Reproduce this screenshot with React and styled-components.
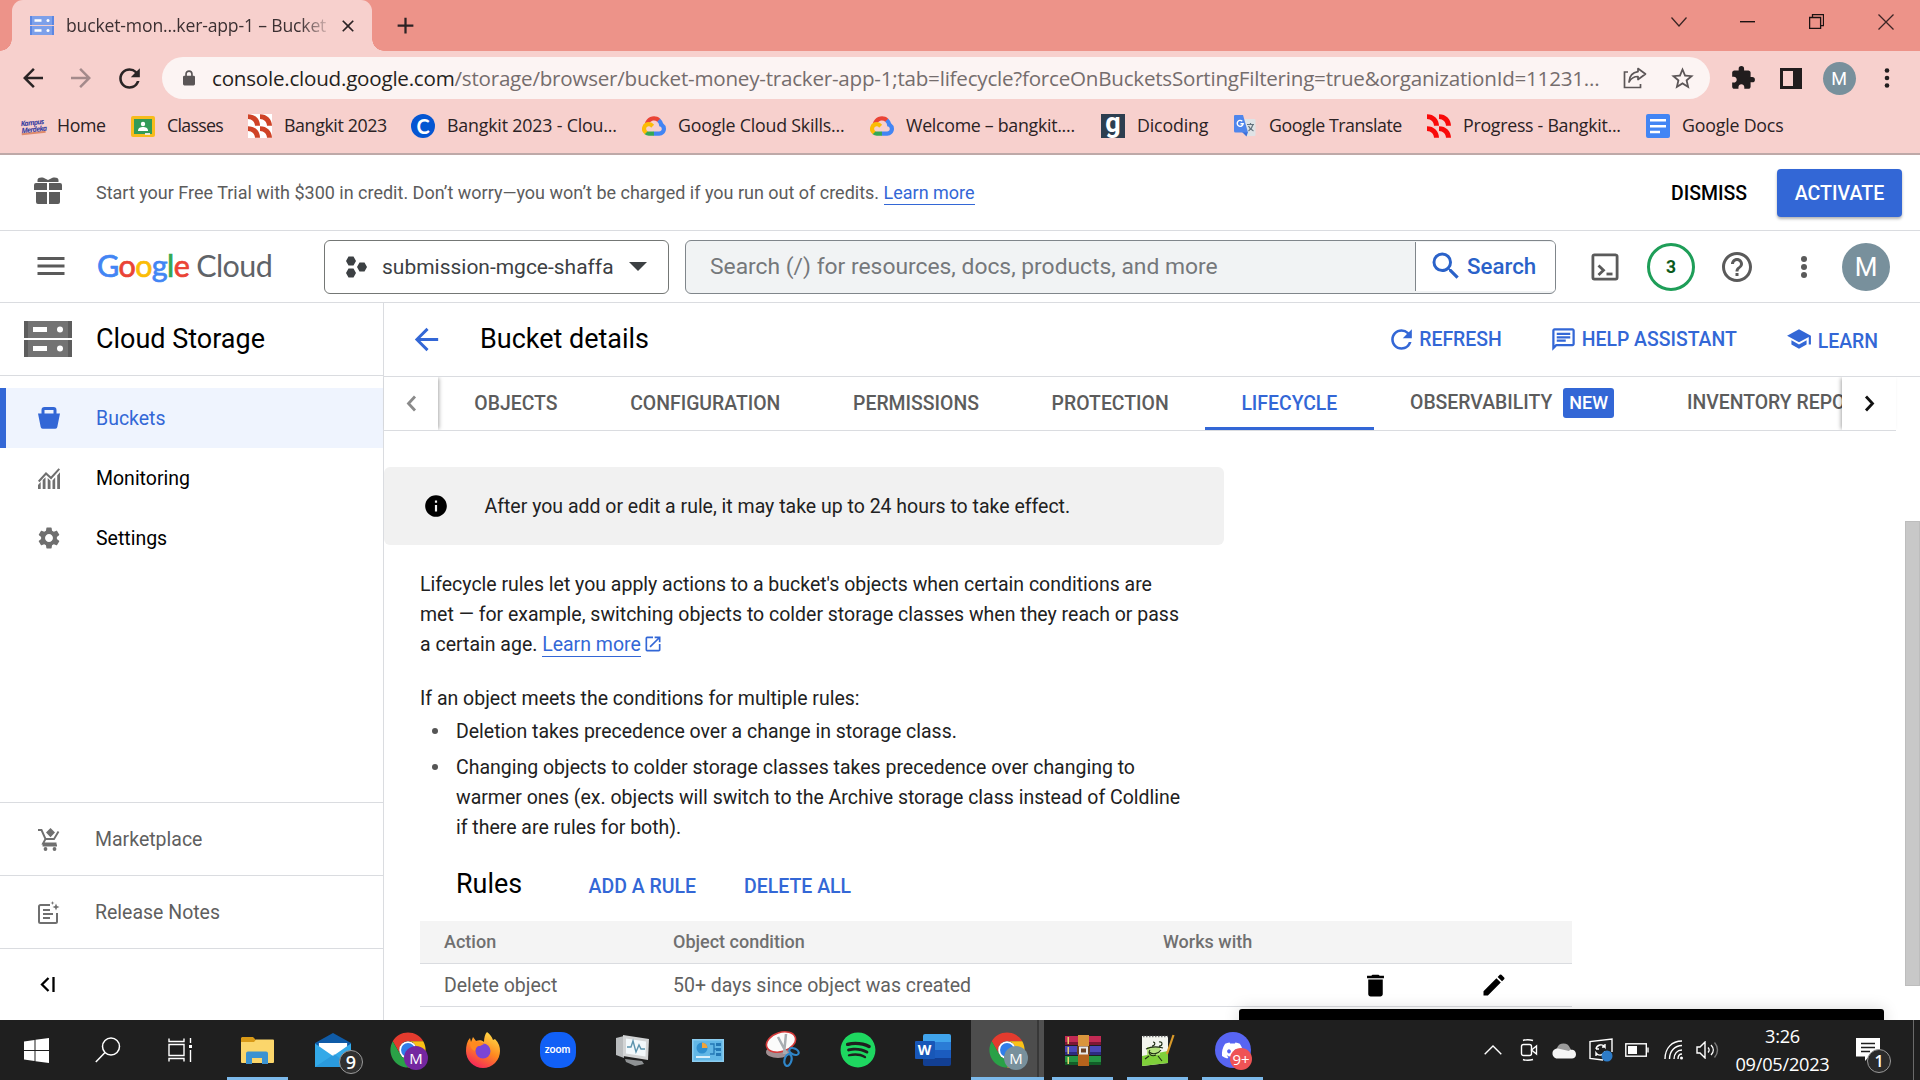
import React from "react";
import styled, { createGlobalStyle, css } from "styled-components";
import {
  MdMenu, MdArrowBack, MdArrowForward, MdRefresh, MdClose, MdAdd, MdStarBorder,
  MdExtension, MdHelpOutline, MdSchool, MdInfo, MdDelete, MdEdit, MdSettings,
  MdOpenInNew, MdSearch, MdOutlineChat,
} from "react-icons/md";
import { FaSpotify, FaDiscord } from "react-icons/fa";

const BLUE = "#3367d6";
const LINE = "#dadce0";

const GlobalStyle = createGlobalStyle`
  *, *::before, *::after { box-sizing: border-box; }
  body { margin: 0; overflow: hidden; background: #fff; }
  svg { display: block; flex: none; }
`;

const Screen = styled.div`
  position: relative;
  width: 1920px;
  height: 1080px;
  display: flex;
  flex-direction: column;
  overflow: hidden;
  white-space: nowrap;
  font-family: Roboto, "Liberation Sans", sans-serif;
  font-size: 19.49px;
  color: #000;
`;

/* ---------- browser ---------- */

const Browser = styled.div`
  flex: none;
  height: 155px;
  background: #f7d0cd;
  border-bottom: 2px solid #bea9a8;
  font-family: "Open Sans", "Noto Sans", sans-serif;
  color: #2b2224;
`;
const TabStrip = styled.div`
  height: 51px;
  background: #ed9389;
  display: flex;
  padding-left: 12px;
`;
const BrowserTab = styled.div`
  position: relative;
  width: 360px;
  height: 51px;
  background: #f7d0cd;
  border-radius: 11px 11px 0 0;
  display: flex;
  align-items: center;
  padding: 0 14px 0 18px;
  &::before, &::after {
    content: "";
    position: absolute;
    bottom: 0;
    width: 12px;
    height: 12px;
  }
  &::before { left: -12px; background: radial-gradient(circle at 0 0, #ed9389 11.5px, #f7d0cd 12px); }
  &::after { right: -12px; background: radial-gradient(circle at 100% 0, #ed9389 11.5px, #f7d0cd 12px); }
`;
const TabTitle = styled.span`
  margin-left: 12px;
  padding-bottom: 2px;
  width: 265px;
  overflow: hidden;
  font-size: 17.6px;
  letter-spacing: -0.17px;
  color: #3c3032;
  mask-image: linear-gradient(90deg, #000 234px, rgba(0, 0, 0, 0.15) 262px);
`;
const TabClose = styled.span`margin-left: 9px; display: flex;`;
const NewTab = styled.span`margin-left: 20px; padding-top: 12px; color: #2b2224;`;
const WindowControls = styled.div`
  margin-left: auto;
  width: 276px;
  height: 43px;
  display: grid;
  grid-template-columns: repeat(4, 69px);
  align-items: center;
  justify-items: center;
`;
const AddressBar = styled.div`
  height: 54px;
  padding: 6px 0 6px 15px;
  display: flex;
  align-items: center;
`;
const NavButton = styled.span`
  width: 48px;
  padding-left: 3px;
  color: ${(p) => (p.$muted ? "#a48a8b" : "#2a2425")};
`;
const Omnibox = styled.div`
  width: 1548px;
  height: 42px;
  margin-left: 3px;
  border-radius: 21px;
  background: #fcf4f3;
  display: flex;
  align-items: center;
  padding: 0 14px 0 21px;
`;
const Url = styled.span`
  margin-left: 17px;
  width: 1411px;
  font-size: 20.6px;
  letter-spacing: -0.228px;
  color: #756d6d;
  b { font-weight: 400; color: #251f20; }
`;
const BrowserActions = styled.div`
  display: grid;
  grid-template-columns: 48px 48px 48px 48px;
  align-items: center;
  justify-items: center;
  margin-left: 9px;
  color: #211d1e;
`;
const RoundAvatar = styled.span`
  width: ${(p) => p.$size}px;
  height: ${(p) => p.$size}px;
  border-radius: 50%;
  background: ${(p) => p.$bg || "#78909c"};
  color: #fff;
  display: flex;
  align-items: center;
  justify-content: center;
  font-family: Roboto, sans-serif;
  font-size: ${(p) => p.$font}px;
`;
const BookmarkBar = styled.div`
  height: 42px;
  padding-left: 21px;
  display: flex;
  align-items: center;
`;
const Bookmark = styled.div`
  flex: none;
  width: ${(p) => p.$w}px;
  display: flex;
  align-items: center;
  gap: 12px;
  font-size: 17.8px;
  letter-spacing: ${(p) => p.$ls || 0}px;
`;
const BookmarkName = styled.span`padding-bottom: 2px;`;

/* ---------- console ---------- */

const Banner = styled.div`
  flex: none;
  height: 76px;
  border-bottom: 1px solid ${LINE};
  display: flex;
  align-items: center;
  padding: 0 18px 0 34px;
  font-size: 17.99px;
  color: #5c5c5c;
`;
const BannerText = styled.span`margin-left: 34px;`;
const TextLink = styled.a`
  color: ${BLUE};
  border-bottom: 1px solid ${BLUE};
  padding-bottom: ${(p) => p.$pb || 0}px;
`;
const Dismiss = styled.span`
  margin-left: auto;
  margin-right: 30px;
  padding-top: 2px;
  font-weight: 500;
  font-size: 19.45px;
  color: #000;
`;
const Activate = styled.button`
  width: 125px;
  height: 48px;
  padding: 2px 0 0;
  border: 0;
  border-radius: 4px;
  background: ${BLUE};
  color: #fff;
  font: 500 19.6px Roboto, sans-serif;
  box-shadow: 0 2px 3px rgba(0, 0, 0, 0.3);
`;
const Header = styled.header`
  flex: none;
  height: 72px;
  border-bottom: 1px solid ${LINE};
  display: flex;
  align-items: center;
  padding-left: 33px;
  color: #5a5a5a;
  > svg { margin-bottom: 2px; }
`;
const Logo = styled.span`
  margin-left: 28px;
  padding-bottom: 3px;
  width: 227px;
  font: 400 30.5px Lato, sans-serif;
  letter-spacing: -0.6px;
  display: flex;
  gap: 7px;
  color: #5f6368;
`;
const LogoLetter = styled.span`
  color: ${(p) => p.$c};
  -webkit-text-stroke: 0.7px ${(p) => p.$c};
`;
const ProjectPicker = styled.div`
  width: 345px;
  height: 54px;
  border: 1px solid #747775;
  border-radius: 6px;
  display: flex;
  align-items: center;
  padding-left: 21px;
  font-size: 20.97px;
  color: #3c4043;
`;
const ProjectName = styled.span`margin: 0 15px 0 15px;`;
const SearchBox = styled.div`
  margin-left: 16px;
  width: 871px;
  height: 54px;
  border: 1px solid #80868b;
  border-radius: 6px;
  display: flex;
  overflow: hidden;
  background: #f1f3f4;
  font-size: 22.84px;
  color: #75787b;
`;
const SearchInput = styled.span`
  width: 729px;
  line-height: 51px;
  padding-left: 24px;
`;
const SearchButton = styled.span`
  flex: 1;
  margin: 1px 0 2px;
  border-left: 1px solid #80868b;
  background: #fff;
  display: flex;
  align-items: center;
  padding-left: 12px;
  gap: 3px;
  color: #2a62c9;
  font-weight: 500;
  font-size: 22.3px;
`;
const HeaderTools = styled.div`
  flex: 1;
  display: grid;
  grid-template-columns: 66px 66px 66px 68px 56px;
  padding-left: 16px;
  align-items: center;
  justify-items: center;
`;
const Count = styled.span`
  width: 48px;
  height: 48px;
  border: 3px solid #1e9e58;
  border-radius: 50%;
  display: flex;
  align-items: center;
  justify-content: center;
  font-weight: 700;
  font-size: 17.5px;
  color: #0c5a1d;
`;
const Body = styled.div`
  flex: 1;
  min-height: 0;
  display: flex;
`;
const Sidebar = styled.aside`
  width: 384px;
  border-right: 1px solid ${LINE};
  display: flex;
  flex-direction: column;
`;
const SideTitle = styled.div`
  height: 73px;
  border-bottom: 1px solid ${LINE};
  margin-bottom: 12px;
  padding: 0 0 0 24px;
  display: flex;
  align-items: center;
  gap: 24px;
  font-size: 26.98px;
`;
const NavItem = styled.div`
  height: 60px;
  padding-left: 37.5px;
  display: flex;
  align-items: center;
  gap: 36.5px;
  color: #000;
  svg { color: #6f6f6f; }
  ${(p) => p.$active && css`
    padding-left: 31.5px;
    border-left: 6px solid ${BLUE};
    background: #eff4fe;
    color: ${BLUE};
    svg { color: ${BLUE}; }
  `}
`;
const NavFoot = styled.div`
  height: ${(p) => (p.$last ? 72 : 73)}px;
  border-top: 1px solid ${LINE};
  padding-left: 37.5px;
  display: flex;
  align-items: center;
  gap: 35.5px;
  color: #5f5f5f;
  svg { color: #6f6f6f; }
`;
const Spacer = styled.div`flex: 1;`;
const Main = styled.main`
  flex: 1;
  min-width: 0;
  display: flex;
  flex-direction: column;
`;
const TitleBar = styled.div`
  flex: none;
  height: 74px;
  border-bottom: 1px solid ${LINE};
  display: flex;
  align-items: center;
  padding: 0 42px 1px 24.5px;
`;
const PageTitle = styled.h1`
  margin: 0 auto 0 36.5px;
  font-size: 26.98px;
  font-weight: 400;
`;
const TitleAction = styled.span`
  display: flex;
  align-items: center;
  gap: ${(p) => p.$gap || 5}px;
  margin-left: ${(p) => p.$ml || 0}px;
  font-weight: 500;
  font-size: 19.4px;
  color: ${BLUE};
`;
const Lowered = styled.span`position: relative; top: 2px;`;
const TabRow = styled.div`
  flex: none;
  width: 1512px;
  height: 54px;
  border-bottom: 1px solid ${LINE};
  display: flex;
`;
const ScrollTabs = styled.span`
  position: relative;
  z-index: 1;
  width: 54px;
  background: #fff;
  display: flex;
  align-items: center;
  justify-content: center;
  color: ${(p) => (p.$dim ? "#8a8a8a" : "#111")};
  box-shadow: ${(p) => (p.$dim ? "2px" : "-2px")} 0 4px -1px rgba(0, 0, 0, 0.35);
  clip-path: inset(0 -8px 0 -8px);
`;
const Tabs = styled.div`
  flex: 1;
  min-width: 0;
  overflow: hidden;
  display: flex;
`;
const Tab = styled.span`
  flex: none;
  padding: 0 36.36px;
  line-height: ${(p) => (p.$tall ? 52 : 54)}px;
  font-weight: 500;
  font-size: 19.4px;
  color: ${(p) => (p.$active ? BLUE : "#5c5c5c")};
  ${(p) => p.$active && css`border-bottom: 3px solid ${BLUE};`}
`;
const NewBadge = styled.span`
  display: inline-block;
  margin-left: 11px;
  width: 51px;
  line-height: 30px;
  border-radius: 3px;
  background: ${BLUE};
  color: #fff;
  text-align: center;
  font-size: 18px;
`;
const ScrollArea = styled.div`
  flex: 1;
  min-height: 0;
  display: flex;
  overflow: hidden;
`;
const Content = styled.div`
  width: 1521px;
  padding-top: 36px;
`;
const Alert = styled.div`
  width: 840px;
  height: 78px;
  border-radius: 6px;
  background: #f1f1f1;
  display: flex;
  align-items: center;
  padding-left: 38.5px;
  gap: 36px;
  color: #212121;
`;
const Copy = styled.div`
  padding: 25px 0 0 36px;
  line-height: 30px;
  color: #212121;
`;
const Para = styled.p`
  margin: 0 0 ${(p) => p.$mb}px;
  svg { display: inline-block; vertical-align: -3px; color: ${BLUE}; margin-left: 2.5px; }
`;
const Bullets = styled.ul`
  margin: 0;
  padding: 0;
  list-style: none;
`;
const Bullet = styled.li`
  display: flex;
  align-items: flex-start;
  margin-bottom: 6px;
  &::before {
    content: "";
    width: 6px;
    height: 6px;
    margin: 11px 18px 0 12px;
    border-radius: 50%;
    background: #555;
  }
`;
const RulesHead = styled.div`
  height: 72px;
  padding-left: 72px;
  display: flex;
  align-items: center;
`;
const RulesTitle = styled.h2`
  width: 132.5px;
  margin: 0 0 3px;
  font-size: 26.9px;
  font-weight: 400;
`;
const RuleAction = styled.span`
  width: 155.5px;
  padding-top: 2px;
  font-weight: 500;
  color: ${BLUE};
`;
const RuleRow = styled.div`
  width: 1152px;
  margin-left: 36px;
  height: 43px;
  border-bottom: 1px solid ${LINE};
  padding-left: 24px;
  display: grid;
  grid-template-columns: 229px 490px 198px 119px 1fr;
  align-items: center;
  color: #616161;
  svg { color: #000; }
  ${(p) => p.$head && css`
    padding-bottom: 2px;
    background: #f4f4f4;
    font-weight: 500;
    font-size: 18px;
    color: #707070;
  `}
`;
const Track = styled.div`
  width: 15px;
  padding-top: 90px;
`;
const Thumb = styled.div`
  height: 465px;
  background: #c8c8c8;
  border: 1px solid #bdbdbd;
`;
const Toast = styled.div`
  position: absolute;
  left: 1239px;
  top: 1009px;
  width: 645px;
  height: 30px;
  border-radius: 3px;
  background: #000;
  box-shadow: 0 0 16px rgba(0, 0, 0, 0.15);
`;

/* ---------- taskbar ---------- */

const Taskbar = styled.div`
  position: relative;
  flex: none;
  height: 60px;
  background: #1f1f1f;
  color: #fff;
  display: flex;
`;
const SysButton = styled.span`
  width: 72px;
  display: flex;
  align-items: center;
  justify-content: center;
`;
const Apps = styled.div`
  display: flex;
  padding-left: 4px;
`;
const AppSlot = styled.span`
  position: relative;
  width: 75px;
  display: flex;
  align-items: center;
  justify-content: center;
  ${(p) => p.$on && css`
    background: linear-gradient(90deg, #4d4d4d 66px, #383838 66px 68px, #505050 68px);
    width: 73px;
    margin: 0 1px;
    padding-right: 2px;
  `}
  ${(p) => p.$open && css`
    &::after {
      content: "";
      position: absolute;
      bottom: 0;
      left: ${p.$on ? 0 : 7}px;
      right: ${p.$on ? 0 : 7}px;
      height: 3px;
      background: #7cb9ea;
    }
  `}
`;
const Badge = styled.span`
  position: absolute;
  left: ${(p) => p.$x}px;
  top: ${(p) => p.$y}px;
  width: ${(p) => p.$s || 24}px;
  height: ${(p) => p.$s || 24}px;
  border-radius: 50%;
  border: ${(p) => (p.$ring ? "1px solid #9a9a9a" : "0")};
  background: ${(p) => p.$bg};
  color: #fff;
  display: flex;
  align-items: center;
  justify-content: center;
  font: ${(p) => p.$weight || 600} ${(p) => p.$f || 15}px "Open Sans", sans-serif;
`;
const Tray = styled.div`
  margin-left: auto;
  width: 444px;
  display: flex;
`;
const TrayIcons = styled.div`
  width: 247px;
  display: grid;
  grid-template-columns: 34px 37px 35px 37px 36px 37px 30px;
  justify-items: center;
  align-items: center;
`;
const Clock = styled.div`
  width: 121px;
  text-align: center;
  font: 18.2px/28px "Open Sans", sans-serif;
  letter-spacing: -0.25px;
  padding-top: 2px;
  margin-left: -1px;
`;
const Notice = styled.span`
  position: relative;
  padding: 18px 0 0 13px;
`;
const ShowDesktop = styled.span`
  position: absolute;
  right: 6px;
  top: 0;
  width: 1px;
  height: 60px;
  background: #6a6a6a;
`;

/* ---------- drawings ---------- */

const StorageIcon = ({ w, h, c, d }) => (
  <svg width={w} height={h} viewBox="0 0 48 36" preserveAspectRatio="none">
    <path fill={c} d="M0 0h48v17H0zM0 19h48v17H0z" />
    <path fill={d} d="M0 0h4v17H0zM44 0h4v17h-4zM0 19h4v17H0zM44 19h4v17h-4z" />
    <path fill="#fff" d="M9 6h14v5H9zM9 25h14v5H9z" />
    <circle cx="36" cy="8.5" r="3" fill="#fff" />
    <circle cx="36" cy="27.5" r="3" fill="#fff" />
  </svg>
);
const CloudIcon = () => (
  <svg width="24" height="20" viewBox="0 0 256 206">
    <path fill="#EA4335" d="M170.25 56.82l22.25-22.25 1.49-9.37C153.44-11.68 88.98-7.5 52.42 33.92 42.27 45.42 34.73 59.76 30.72 74.57l7.97-1.12 44.5-7.34 3.44-3.51c19.8-21.75 53.27-24.67 76.13-6.17z" />
    <path fill="#4285F4" d="M224.2 73.92a100.25 100.25 0 0 0-30.21-48.72l-31.23 31.23a55.52 55.52 0 0 1 20.38 44.04v5.54c15.35 0 27.8 12.45 27.8 27.8s-12.45 27.48-27.8 27.48h-55.68l-5.46 5.93v33.34l5.46 5.24h55.68c39.93.3 72.55-31.5 72.86-71.43a72.32 72.32 0 0 0-31.8-60.45" />
    <path fill="#34A853" d="M71.87 205.8h55.6v-44.51h-55.6c-3.96 0-7.8-.85-11.4-2.5l-7.89 2.42-22.4 22.25-1.96 7.58a71.96 71.96 0 0 0 43.65 14.76" />
    <path fill="#FBBC05" d="M71.87 61.43A72.3 72.3 0 0 0 28.22 191.04l32.25-32.25a27.8 27.8 0 1 1 36.78-36.77l32.24-32.25a72.15 72.15 0 0 0-57.62-28.34" />
  </svg>
);
const BangkitIcon = ({ c, bg }) => (
  <svg width="24" height="24" viewBox="0 0 24 24">
    {bg && <rect width="24" height="24" fill={bg} />}
    {[[0, 0], [12, 0], [0, 12], [12, 12]].map(([x, y]) => (
      <path key={`${x}-${y}`} transform={`translate(${x} ${y})`} fill={c} d="M0 .2C7 .2 12 5 12 11.800H7C7 8 4 5 0 5z" />
    ))}
  </svg>
);
const ChromeMark = () => (
  <svg width="36" height="36" viewBox="1.500 1.500 45 45">
    {[["#e33b2e", 0], ["#fbc116", 120], ["#2aa147", 240]].map(([c, a]) => (
      <path key={a} fill={c} transform={`rotate(${a} 24 24)`} d="M4.95 13A22 22 0 0 1 43.05 13H24A11 11 0 0 0 14.47 29.5z" />
    ))}
    <circle cx="24" cy="24" r="11" fill="#fff" />
    <circle cx="24" cy="24" r="8.700" fill="#2f7de9" />
  </svg>
);
const Dots = ({ gap, r, h }) => (
  <svg width="8" height={h} viewBox={`0 0 8 ${h}`} fill="currentColor">
    {[-gap, 0, gap].map((d) => <circle key={d} cx="4" cy={h / 2 + d} r={r} />)}
  </svg>
);
const LockIcon = () => (
  <svg width="12" height="16" viewBox="0 0 13 17" preserveAspectRatio="none">
    <path fill="none" stroke="#5a5556" strokeWidth="1.800" d="M3.300 7V4.300a3.200 3.200 0 0 1 6.400 0V7" />
    <rect x="0" y="6" width="13" height="10.500" rx="1.500" fill="#5a5556" />
  </svg>
);

const KampusIcon = styled.span`
  width: 24px;
  font: italic 700 7.2px/6.5px "Open Sans", sans-serif;
  letter-spacing: -0.7px;
  color: #3940a0;
  transform: rotate(-6deg);
  border-bottom: 2px solid #df8a6c;
`;
const LetterIcon = styled.span`
  width: 24px;
  height: 24px;
  border-radius: ${(p) => (p.$round ? "50%" : "0")};
  background: ${(p) => p.$bg};
  color: #fff;
  display: flex;
  align-items: center;
  justify-content: center;
  font: 700 ${(p) => p.$f}px/1 ${(p) => (p.$round ? "Lato" : "Roboto")}, sans-serif;
  padding-bottom: ${(p) => p.$pb || 0}px;
`;

const ClassesIcon = () => (
  <svg width="24" height="21" viewBox="0 0 24 21">
    <rect width="24" height="21" rx="2" fill="#f6bc1c" />
    <rect x="3" y="3" width="18" height="15" fill="#319b58" />
    <circle cx="12" cy="8" r="2.200" fill="#fff" />
    <path d="M7 14.500c0-2.500 2.500-3.500 5-3.500s5 1 5 3.500V15H7z" fill="#fff" />
    <path d="M14 17h5v2h-5z" fill="#e8e8d8" />
  </svg>
);
const TranslateIcon = () => (
  <svg width="24" height="24" viewBox="0 0 24 24">
    <path fill="#dfe3e6" d="M11 5h10.500a1 1 0 0 1 1 1v15a1 1 0 0 1-1 1H14z" />
    <path fill="#3d6fd8" d="M9 18h6l-1.500 4.500z" />
    <path fill="#4f86ec" d="M1.500 1H10l5 17.500H2.500a1.500 1.500 0 0 1-1.500-1.500V2z" />
    <path fill="none" stroke="#fff" strokeWidth="1.400" d="M9.300 7.200a3 3 0 1 0 .9 2.500H7.500" />
    <path fill="none" stroke="#66757f" strokeWidth="1.200" d="M14 10.500h7M17.500 9v1.500M20 10.500c-.7 3-2.500 5-4.500 6.500M15.500 12c1 2.500 3 4 5 5" />
  </svg>
);
const DocsIcon = () => (
  <svg width="24" height="24" viewBox="0 0 24 24">
    <rect width="24" height="24" rx="2" fill="#4285f4" />
    <path fill="#fff" d="M4 5h16v2.500H4zM4 11h16v2.500H4zM4 16.700h10v2.500H4z" />
  </svg>
);
const ShareIcon = () => (
  <svg width="24" height="22" viewBox="0 0 24 22" fill="none" stroke="#5c5657" strokeWidth="1.700">
    <path d="M5 5H1.500v15.500h16V17" />
    <path d="M15 1.500 22.500 7 15 12.500V9.500C10.500 9.500 8 11.500 6 15 6.300 9.500 9.500 5.500 15 4.700z" strokeLinejoin="round" />
  </svg>
);
const GiftIcon = () => (
  <svg width="28" height="31" viewBox="0 0 28 31" fill="#5c5c5c">
    <path d="M3.500 3C3.500.5 7 0 9.500.7L14 3l4.500-2.300C21 0 24.500.5 24.500 3v2h-21z" />
    <path d="M2 6h11v7H0V8a2 2 0 0 1 2-2zM15 6h11a2 2 0 0 1 2 2v5H15zM2 15h11v12H4a2 2 0 0 1-2-2zM15 15h11v10a2 2 0 0 1-2 2h-9z" />
  </svg>
);
const HexIcon = () => (
  <svg width="21" height="22" viewBox="0 0 21 22" fill="#3c4043">
    <path d="M2.500.5h5L10 5 7.500 9.500h-5L0 5zM2.500 12.500h5L10 17l-2.500 4.500h-5L0 17zM13.500 6.500h5L21 11l-2.500 4.500h-5L11 11z" />
  </svg>
);
const ShellIcon = () => (
  <svg width="28" height="28" viewBox="0 0 28 28" fill="none" stroke="currentColor" strokeWidth="2.800">
    <rect x="1.900" y="1.900" width="24.200" height="24.200" rx="1.500" />
    <path d="m7.500 12.500 5 4.800-5 4.800" />
    <path d="M15.500 21h6" />
  </svg>
);
const BucketIcon = () => (
  <svg width="22" height="22" viewBox="0 0 22 22" fill="currentColor">
    <path d="M3.500 6.500V3a3 3 0 0 1 3-3h9a3 3 0 0 1 3 3v3.500H22L19.300 20a2 2 0 0 1-2 1.800H4.700a2 2 0 0 1-2-1.800L0 6.500zM6.500 6.500h9V3h-9z" fillRule="evenodd" />
  </svg>
);
const MonitorIcon = () => (
  <svg width="22" height="21" viewBox="0 0 22 21">
    <path fill="none" stroke="currentColor" strokeWidth="2" d="M.7 13.500 8 5.500l5 4.500L21.300.8" />
    <path fill="currentColor" d="M0 17l2.700-3v7H0zM4.700 12 7.500 9.300V21H4.700zM9.700 10l2.800 2.800V21H9.700zM14.500 12.500l2.700-3V21h-2.700zM19.200 7.500 22 4.300V21h-2.800z" />
  </svg>
);
const MarketIcon = () => (
  <svg width="22" height="23" viewBox="0 0 22 23" fill="none" stroke="currentColor" strokeWidth="2">
    <path d="M0 2h3.500l4 9H16l4.500-7.500M7.500 11l-2.500 4.500h13.500M5.500 15.500v2H19" strokeWidth="1.900" />
    <path d="M12.500 0 17 4.500 12.500 9.300 8 4.500z" fill="currentColor" stroke="none" />
    <circle cx="7.500" cy="21" r="1.900" fill="currentColor" stroke="none" />
    <circle cx="16.500" cy="21" r="1.900" fill="currentColor" stroke="none" />
  </svg>
);
const ReleaseIcon = () => (
  <svg width="22" height="23" viewBox="0 0 22 23" fill="none" stroke="currentColor" strokeWidth="2">
    <path d="M12 4H2.500A1.500 1.500 0 0 0 1 5.500v15A1.500 1.500 0 0 0 2.500 22h15a1.500 1.500 0 0 0 1.500-1.500V12" />
    <path d="M5 9h7M5 13h10M5 17h7" />
    <path fill="currentColor" stroke="none" d="M18 2.500 19 5l2.500 1L19 7l-1 2.500L17 7l-2.500-1L17 5zM14.500 0l.5 1.500 1.500.5-1.500.500-.5 1.500-.5-1.500-1.500-.5 1.500-.5z" />
  </svg>
);
const Chevron = ({ d }) => (
  <svg width="11" height="17" viewBox="0 0 11 17" fill="none" stroke="currentColor" strokeWidth="2.800">
    <path d={d} />
  </svg>
);

/* taskbar drawings */
const WindowsIcon = () => (
  <svg width="25" height="25" viewBox="0 0 25 25" fill="#fff">
    <path d="M0 3.500 10.500 2v10H0zM11.500 1.800 25 0v12H11.500zM0 13h10.500v10L0 21.500zM11.500 13H25v12l-13.500-1.800z" />
  </svg>
);
const FindIcon = () => (
  <svg width="26" height="26" viewBox="0 0 26 26" fill="none" stroke="#fff" strokeWidth="1.500">
    <circle cx="16" cy="9.500" r="8.500" /><path d="M10 15.500.8 25" />
  </svg>
);
const TaskViewIcon = () => (
  <svg width="24" height="24" viewBox="0 0 24 24" fill="none" stroke="#fff" strokeWidth="1.400">
    <path d="M1 6.500h15v11H1zM1 .5v3h15v-3M1 23.500v-3h15v3M22.500 0v5M22.500 12v12" />
    <path d="M21 7h3v3h-3z" fill="#fff" stroke="none" />
  </svg>
);
const FolderIcon = () => (
  <svg width="33" height="27" viewBox="0 0 33 27">
    <path fill="#d99a17" d="M1 0h11l3 3v6H0V1z" />
    <path fill="#fbd66b" d="M0 5h13l2-2.500h17a1 1 0 0 1 1 1V25a1 1 0 0 1-1 1H1a1 1 0 0 1-1-1z" />
    <path fill="#3b92d1" d="M7 14.500h18a2 2 0 0 1 2 2V27h-6v-6H11v6H5V16.500a2 2 0 0 1 2-2z" />
  </svg>
);
const MailIcon = () => (
  <svg width="36" height="34" viewBox="0 0 37 34" preserveAspectRatio="none">
    <path fill="#0f5ba7" d="M0 10 18.500 0 37 10v12H0z" />
    <path fill="#fff" d="M4 10h29v9L18.500 25 4 18z" />
    <path fill="#33a9e8" d="M0 10.500 18.500 23 37 10.500V34H0z" />
    <path fill="#1b7fc9" d="M0 34 20 21l17 13z" opacity=".35" />
  </svg>
);
const FirefoxIcon = () => (
  <svg width="36" height="36" viewBox="0 0 36 36">
    <defs>
      <linearGradient id="fx" x1="0.800" y1="0" x2="0.300" y2="1">
        <stop offset="0" stopColor="#ffe04a" /><stop offset=".5" stopColor="#ff8a1f" /><stop offset="1" stopColor="#f5235c" />
      </linearGradient>
    </defs>
    <path fill="url(#fx)" d="M22 0c3 2 5 5 6 8l2-1c4 4 5 8 5 12A17 17 0 0 1 1 19C1 14 2 9 5 6l1 4 2-5 3 4c3-1 6-1 8 1 0-4 1-8 3-10z" />
    <circle cx="18" cy="19" r="7.500" fill="#7a45d6" />
    <path fill="#ff8a1f" d="M5 11c5-3 10-2 14 1l-4 2c-3 0-5 2-5 5-3-1-5-4-5-8z" />
  </svg>
);
const ZoomTile = styled.span`
  width: 36px;
  height: 36px;
  border-radius: 15px;
  background: #1160f6;
  display: flex;
  align-items: center;
  justify-content: center;
  font: 700 10.5px Lato, sans-serif;
  padding-bottom: 2px;
`;
const PerfIcon = () => (
  <svg width="34" height="32" viewBox="0 0 34 32">
    <path fill="#b9bcbe" d="M0 4 8 2v22l-8-3z" />
    <path fill="#8f9294" d="M9 25l17 2 2 3-9 2-9-4z" />
    <path fill="#d2d4d5" d="M7 1l26 4-1 21L7 22z" />
    <path fill="#f2f8fb" d="M10 4.500l20 3-.5 15L10 19.500z" />
    <path fill="none" stroke="#5b93ad" strokeWidth="1.400" d="M11 13h4l2-6 3 11 3-7 2 4h4" />
  </svg>
);
const PanelIcon = () => (
  <svg width="32" height="23" viewBox="0 0 32 23">
    <rect width="32" height="23" fill="#8ccdf0" /><rect x="1.500" y="1.500" width="29" height="20" fill="#62b7e6" />
    <circle cx="10" cy="9" r="5.500" fill="#2f8fcf" /><path d="M10 9V3.500A5.500 5.500 0 0 1 15.500 9z" fill="#f0a43a" />
    <path stroke="#2478b5" strokeWidth="1.300" fill="none" d="M18 5h4v10h-4M22 10h2" /><path fill="#2478b5" d="M24 4h5v3h-5zM24 9h5v3h-5zM24 14h5v3h-5z" /><path fill="#d9effa" d="M4 17h14v2H4z" />
  </svg>
);
const SnipIcon = () => (
  <svg width="36" height="42" viewBox="0 -2 36 42">
    <ellipse cx="13" cy="21" rx="12" ry="6" fill="#a08f92" />
    <ellipse cx="16" cy="11" rx="15" ry="9.500" fill="#fbfbfb" stroke="#d63b3b" strokeWidth="1.600" transform="rotate(-18 16 11)" />
    <path stroke="#a8adb2" strokeWidth="2.500" d="M13 6l9 17M21 3l-2 20" />
    <ellipse cx="29" cy="20.500" rx="5" ry="3" fill="none" stroke="#2f86c9" strokeWidth="2.200" transform="rotate(25 29 20.500)" />
    <ellipse cx="23" cy="29" rx="3.500" ry="6" fill="none" stroke="#2f86c9" strokeWidth="2.200" transform="rotate(14 23 29)" />
  </svg>
);
const WordFrame = styled.span`
  position: relative;
  width: 36px;
  height: 32px;
  padding-left: 8px;
  display: flex;
  &::before {
    content: "";
    width: 28px;
    height: 32px;
    border-radius: 2px;
    background: linear-gradient(#40a4ec 8px, #2b7cd6 8px 16px, #1b5cbf 16px 24px, #123f93 24px);
  }
`;
const WordLetter = styled.span`
  position: absolute;
  left: 0;
  top: 7px;
  width: 20px;
  height: 18px;
  border-radius: 1px;
  background: #1857b8;
  font: 700 14px/17px "Open Sans", sans-serif;
  text-align: center;
`;
const RarIcon = () => (
  <svg width="36" height="31" viewBox="0 0 36 31">
    <path fill="#c22a54" d="M0 1h36v9H0z" /><path fill="#4b48b8" d="M0 11h36v9H0z" /><path fill="#259443" d="M0 21h36v9H0z" />
    <path fill="#7d1735" d="M0 7h36v3H0z" /><path fill="#2d2b80" d="M0 17h36v3H0z" /><path fill="#125e28" d="M0 27h36v3H0z" />
    <path fill="#e9d36b" d="M2.500 2h1.500v7H2.500zM2.500 12h1.500v7H2.500zM2.500 22h1.500v7H2.500z" />
    <path fill="#d9953c" d="M13 0h11v12H13z" /><path fill="#b5631d" d="M13 19h11v12H13z" />
    <path fill="#6b4022" d="M12 11h13v8H12z" /><rect x="15" y="12.500" width="7" height="6" fill="none" stroke="#e8e8e8" strokeWidth="2" />
  </svg>
);
const NotepadIcon = () => (
  <svg width="34" height="33" viewBox="0 0 34 33">
    <path fill="#f3f5ee" d="M1 2h26v27L1 32z" />
    <path fill="#7fcf3a" d="M1 22l26-5v12L1 32z" />
    <path fill="#b6e37e" d="M6 13h13v8H6z" />
    <path stroke="#777" strokeWidth="1.500" strokeDasharray="1.500 1.500" d="M2 2.500h25" />
    <path fill="none" stroke="#1e2d14" strokeWidth="1.100" d="M5 15c4-2 10-3 17-1M12 8c3 0 2 4-1 4M18 8c4-1 4 4 0 4M8 18c4 3 9 2 12-2M9 16c-3 4 2 7 6 5M4 25l4-3M17 22l4 5" />
    <path stroke="#d99a2a" strokeWidth="2.200" d="M32.500 1 26 20" />
  </svg>
);
const DiscordTile = styled.span`
  width: 36px;
  height: 36px;
  border-radius: 50%;
  background: #5865f2;
  display: flex;
  align-items: center;
  justify-content: center;
`;
const line = { fill: "none", stroke: "#fff", strokeWidth: 1.4 };

const bookmarks = [
  { w: 110, ls: -0.4, t: "Home", icon: <KampusIcon>Kampus<br />Merdeka</KampusIcon> },
  { w: 117, ls: -0.7, t: "Classes", icon: <ClassesIcon /> },
  { w: 163, ls: -0.38, t: "Bangkit 2023", icon: <BangkitIcon c="#cf4327" bg="#fff" /> },
  { w: 231, ls: -0.18, t: "Bangkit 2023 - Clou...", icon: <LetterIcon $round $bg="#0556d2" $f={20} $pb={1}>C</LetterIcon> },
  { w: 228, ls: -0.2, t: "Google Cloud Skills...", icon: <CloudIcon /> },
  { w: 231, ls: -0.29, t: "Welcome – bangkit....", icon: <CloudIcon /> },
  { w: 132, ls: -0.15, t: "Dicoding", icon: <LetterIcon $bg="#2d3e50" $f={27} $pb={6}>g</LetterIcon> },
  { w: 194, ls: -0.45, t: "Google Translate", icon: <TranslateIcon /> },
  { w: 219, ls: -0.28, t: "Progress - Bangkit...", icon: <BangkitIcon c="#f90a0a" /> },
  { w: 150, ls: -0.2, t: "Google Docs", icon: <DocsIcon /> },
];

export default function App() {
  return (
    <Screen>
      <GlobalStyle />
      <Browser>
        <TabStrip>
          <BrowserTab>
            <StorageIcon w={24} h={19} c="#7da0ea" d="#5c87e2" />
            <TabTitle>bucket-mon...ker-app-1 – Bucket</TabTitle>
            <TabClose><MdClose size={20} /></TabClose>
          </BrowserTab>
          <NewTab><MdAdd size={27} /></NewTab>
          <WindowControls>
            <svg width="16" height="10" viewBox="0 0 16 10" fill="none" stroke="#3a2524" strokeWidth="1.300"><path d="M.5.5 8 9 15.500.5" /></svg>
            <svg width="15" height="2" viewBox="0 0 15 2"><path d="M0 0h15v1.400H0z" fill="#1c1212" /></svg>
            <svg width="15" height="15" viewBox="0 0 15 15" fill="none" stroke="#1c1212" strokeWidth="1.300"><path d="M.6 3.500h11v11H.6zM3.500 3.500V.6h11v11h-3" /></svg>
            <svg width="16" height="16" viewBox="0 0 16 16" fill="none" stroke="#3a2524" strokeWidth="1.300"><path d="M.5.5l15 15M15.500.5l-15 15" /></svg>
          </WindowControls>
        </TabStrip>
        <AddressBar>
          <NavButton><MdArrowBack size={30} /></NavButton>
          <NavButton $muted><MdArrowForward size={30} /></NavButton>
          <NavButton><MdRefresh size={31} /></NavButton>
          <Omnibox>
            <LockIcon />
            <Url><b>console.cloud.google.com</b>/storage/browser/bucket-money-tracker-app-1;tab=lifecycle?forceOnBucketsSortingFiltering=true&amp;organizationId=11231...</Url>
            <ShareIcon />
            <Spacer />
            <MdStarBorder size={27} color="#5c5657" />
          </Omnibox>
          <BrowserActions>
            <MdExtension size={26} />
            <svg width="22" height="21" viewBox="0 0 22 21"><path fill="currentColor" fillRule="evenodd" d="M0 0h22v21H0zM3 3v15h10V3z" /></svg>
            <RoundAvatar $size={33} $font={18}>M</RoundAvatar>
            <Dots gap={7.5} r={2.3} h={22} />
          </BrowserActions>
        </AddressBar>
        <BookmarkBar>
          {bookmarks.map((b) => (
            <Bookmark key={b.t} $w={b.w} $ls={b.ls}>{b.icon}<BookmarkName>{b.t}</BookmarkName></Bookmark>
          ))}
        </BookmarkBar>
      </Browser>

      <Banner>
        <GiftIcon />
        <BannerText>
          Start your Free Trial with $300 in credit. Don’t worry—you won’t be charged if you run out of credits.{" "}
          <TextLink $pb={1}>Learn more</TextLink>
        </BannerText>
        <Dismiss>DISMISS</Dismiss>
        <Activate>ACTIVATE</Activate>
      </Banner>

      <Header>
        <MdMenu size={36} />
        <Logo>
          <span>
            {[["G", "#4285f4"], ["o", "#ea4335"], ["o", "#fbbc05"], ["g", "#4285f4"], ["l", "#34a853"], ["e", "#ea4335"]].map(([l, c], i) => (
              <LogoLetter key={i} $c={c}>{l}</LogoLetter>
            ))}
          </span>
          <span>Cloud</span>
        </Logo>
        <ProjectPicker>
          <HexIcon />
          <ProjectName>submission-mgce-shaffa</ProjectName>
          <svg width="18" height="9" viewBox="0 0 18 9"><path d="M0 0h18L9 9z" fill="#3c4043" /></svg>
        </ProjectPicker>
        <SearchBox>
          <SearchInput>Search (/) for resources, docs, products, and more</SearchInput>
          <SearchButton><MdSearch size={36} /><span>Search</span></SearchButton>
        </SearchBox>
        <HeaderTools>
          <ShellIcon />
          <Count>3</Count>
          <MdHelpOutline size={36} />
          <Dots gap={8} r={3} h={24} />
          <RoundAvatar $size={48} $font={26}>M</RoundAvatar>
        </HeaderTools>
      </Header>

      <Body>
        <Sidebar>
          <SideTitle><StorageIcon w={48} h={36} c="#737373" d="#5d5d5d" /><span>Cloud Storage</span></SideTitle>
          <NavItem $active><BucketIcon /><span>Buckets</span></NavItem>
          <NavItem><MonitorIcon /><span>Monitoring</span></NavItem>
          <NavItem><svg width="22" height="22" viewBox="2.300 2 19.400 20"><MdSettings size={24} /></svg><span>Settings</span></NavItem>
          <Spacer />
          <NavFoot><MarketIcon /><span>Marketplace</span></NavFoot>
          <NavFoot><ReleaseIcon /><span>Release Notes</span></NavFoot>
          <NavFoot $last>
            <svg width="18" height="15" viewBox="0 0 18 15" fill="none" stroke="#000" strokeWidth="2.300"><path d="M10.500 1 4 7.500l6.500 6.500M15.500 0v15" /></svg>
          </NavFoot>
        </Sidebar>

        <Main>
          <TitleBar>
            <MdArrowBack size={35} color={BLUE} />
            <PageTitle>Bucket details</PageTitle>
            <TitleAction $gap={2}><MdRefresh size={31} /><span>REFRESH</span></TitleAction>
            <TitleAction $ml={48}><MdOutlineChat size={27} /><span>HELP ASSISTANT</span></TitleAction>
            <TitleAction $ml={49} $gap={6}><MdSchool size={26} /><Lowered>LEARN</Lowered></TitleAction>
          </TitleBar>
          <TabRow>
            <ScrollTabs $dim><Chevron d="M9 1.500 2.500 8.500 9 15.500" /></ScrollTabs>
            <Tabs>
              <Tab>OBJECTS</Tab>
              <Tab>CONFIGURATION</Tab>
              <Tab>PERMISSIONS</Tab>
              <Tab>PROTECTION</Tab>
              <Tab $active>LIFECYCLE</Tab>
              <Tab $tall>OBSERVABILITY<NewBadge>NEW</NewBadge></Tab>
              <Tab $tall>INVENTORY REPORTS</Tab>
            </Tabs>
            <ScrollTabs><Chevron d="M2 1.500 8.500 8.500 2 15.500" /></ScrollTabs>
          </TabRow>
          <ScrollArea>
            <Content>
              <Alert><MdInfo size={26} color="#000" /><span>After you add or edit a rule, it may take up to 24 hours to take effect.</span></Alert>
              <Copy>
                <Para $mb={24}>
                  Lifecycle rules let you apply actions to a bucket's objects when certain conditions are<br />
                  met — for example, switching objects to colder storage classes when they reach or pass<br />
                  a certain age. <TextLink>Learn more</TextLink><MdOpenInNew size={20} />
                </Para>
                <Para $mb={3}>If an object meets the conditions for multiple rules:</Para>
                <Bullets>
                  <Bullet>Deletion takes precedence over a change in storage class.</Bullet>
                  <Bullet>
                    Changing objects to colder storage classes takes precedence over changing to<br />
                    warmer ones (ex. objects will switch to the Archive storage class instead of Coldline<br />
                    if there are rules for both).
                  </Bullet>
                </Bullets>
              </Copy>
              <RulesHead>
                <RulesTitle>Rules</RulesTitle>
                <RuleAction>ADD A RULE</RuleAction>
                <RuleAction>DELETE ALL</RuleAction>
              </RulesHead>
              <RuleRow $head><span>Action</span><span>Object condition</span><span>Works with</span></RuleRow>
              <RuleRow>
                <span>Delete object</span><span>50+ days since object was created</span><span />
                <MdDelete size={29} /><MdEdit size={28} />
              </RuleRow>
            </Content>
            <Track><Thumb /></Track>
          </ScrollArea>
        </Main>
      </Body>

      <Toast />

      <Taskbar>
        <SysButton><WindowsIcon /></SysButton>
        <SysButton><FindIcon /></SysButton>
        <SysButton><TaskViewIcon /></SysButton>
        <Apps>
          <AppSlot $open><FolderIcon /></AppSlot>
          <AppSlot><MailIcon /><Badge $x={44} $y={30} $bg="#303030" $ring $f={18}>9</Badge></AppSlot>
          <AppSlot><ChromeMark /><Badge $x={34} $y={26} $bg="#7427a0" $weight={400}>M</Badge></AppSlot>
          <AppSlot><FirefoxIcon /></AppSlot>
          <AppSlot><ZoomTile>zoom</ZoomTile></AppSlot>
          <AppSlot><PerfIcon /></AppSlot>
          <AppSlot><PanelIcon /></AppSlot>
          <AppSlot><SnipIcon /></AppSlot>
          <AppSlot><FaSpotify size={36} color="#1ed760" /></AppSlot>
          <AppSlot><WordFrame><WordLetter>W</WordLetter></WordFrame></AppSlot>
          <AppSlot $open $on><ChromeMark /><Badge $x={33} $y={26} $bg="#78909c" $weight={400}>M</Badge></AppSlot>
          <AppSlot $open><RarIcon /></AppSlot>
          <AppSlot $open><NotepadIcon /></AppSlot>
          <AppSlot $open><DiscordTile><FaDiscord size={23} /></DiscordTile><Badge $x={35} $y={28} $s={22} $bg="#ef5355" $weight={400}>9+</Badge></AppSlot>
        </Apps>
        <Tray>
          <TrayIcons>
            <svg width="18" height="10" viewBox="0 0 18 10" {...line}><path d="M.7 9.300 9 1l8.300 8.300" /></svg>
            <svg width="18" height="22" viewBox="0 0 18 22" {...line}><rect x="1.500" y="5.500" width="10" height="11" rx="2" /><path d="m11.500 11 5-4v8zM3 1.500c2-1 7-1 10 0M3 20.500c2 1 7 1 10 0" /></svg>
            <svg width="25" height="17" viewBox="0 0 25 17"><path fill="#9b9b9b" d="M5 6a7 7 0 0 1 13 0l2 3-14 4z" /><path fill="#f4f4f4" d="M6 6.500 17 9c1-2 7-2 7 3.500 0 2.500-2 4-4 4H5.500C-1.500 16-1 6 6 6.500z" /></svg>
            <svg width="26" height="24" viewBox="0 0 26 24" {...line}><path d="M24 14V1L2 3.500v17L15 22M8 11a5 5 0 0 1 9-2v-3M17 13a5 5 0 0 1-9 2v3M8 11h3M17 9h-3" /><circle cx="19" cy="18" r="5.500" fill="#2d7cc9" stroke="none" /></svg>
            <svg width="24" height="14" viewBox="0 0 24 14" {...line}><rect x=".8" y=".8" width="20.500" height="12.400" /><path d="M3 3h9v8H3z" fill="#fff" stroke="none" /><path d="M23 4.500v5" /></svg>
            <svg width="20" height="20" viewBox="0 0 20 20" {...line}><path d="M1 19C1 8 8 1 18 1M5.500 19C5.500 11 11 5.500 18 5.500M10 19c0-5 3-9 8-9" /><path d="M14 19c0-3 1.500-5 4-5" /><circle cx="17.500" cy="18" r="1.500" fill="#fff" stroke="none" /></svg>
            <svg width="23" height="18" viewBox="0 0 23 18" {...line}><path d="M1 6h3l5-5v16l-5-5H1zM12 6.500c1.500 1.500 1.500 3.500 0 5M15 4c3 3 3 7 0 10" /><path d="M18.500 1.500c4 4.500 4 10.500 0 15" stroke="#777" /></svg>
          </TrayIcons>
          <Clock>3:26<br />09/05/2023</Clock>
          <Notice>
            <svg width="24" height="24" viewBox="0 0 24 24"><path fill="#fff" d="M0 0h24v18.500H13L9 23v-4.500H0z" /><path stroke="#1f1f1f" strokeWidth="1.500" d="M5 5.500h14M5 9.500h14M5 13.500h9" /></svg>
            <Badge $x={24} $y={29} $bg="#2b2b2b" $ring $f={16}>1</Badge>
          </Notice>
        </Tray>
        <ShowDesktop />
      </Taskbar>
    </Screen>
  );
}
